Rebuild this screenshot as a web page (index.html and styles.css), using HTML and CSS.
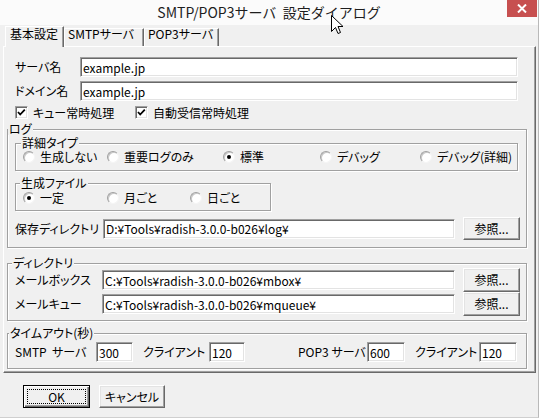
FILE: index.html
```html
<!DOCTYPE html>
<html lang="ja">
<head>
<meta charset="utf-8">
<title>SMTP/POP3サーバ 設定ダイアログ</title>
<link rel="stylesheet" href="styles.css">
</head>
<body>
<div class="window">
  <div class="titlebar">
    <div class="title-spacer"></div>
    <div class="title">SMTP/POP3サーバ  設定ダイアログ</div>
    <div class="close"><svg width="10" height="9" viewBox="0 0 10 9"><path d="M1 0.5 L9 8.5 M9 0.5 L1 8.5" stroke="#fff" stroke-width="2" fill="none"/></svg></div>
    <svg class="cursor" width="13" height="20" viewBox="0 0 13 20"><path d="M0.5 0.5 L0.5 16.5 L4.5 12.5 L7 18.5 L9.5 17.5 L7 11.5 L12 11.5 Z" fill="#fff" stroke="#000" stroke-width="1"/></svg>
  </div>

  <div class="tabs">
    <div class="tab active t1">基本設定</div>
    <div class="tab t2">SMTPサーバ</div>
    <div class="tab t3">POP3サーバ</div>
  </div>

  <div class="panel">
    <div class="field first">
      <span class="lbl lbl-top">サーバ名</span>
      <input class="edit grow" type="text" value="example.jp">
    </div>
    <div class="field second">
      <span class="lbl lbl-top">ドメイン名</span>
      <input class="edit grow" type="text" value="example.jp">
    </div>
    <div class="checks">
      <span class="check c1"><span class="cbox"><svg width="11" height="11" viewBox="0 0 11 11"><path d="M2 5 L4.2 7.5 L8.8 2.6" stroke="#000" stroke-width="1.8" fill="none"/></svg></span>キュー常時処理</span>
      <span class="check"><span class="cbox"><svg width="11" height="11" viewBox="0 0 11 11"><path d="M2 5 L4.2 7.5 L8.8 2.6" stroke="#000" stroke-width="1.8" fill="none"/></svg></span>自動受信常時処理</span>
    </div>

    <div class="group log">
      <div class="gtitle gt-log">ログ</div>
      <div class="group detail">
        <div class="gtitle gt-detail">詳細タイプ</div>
        <div class="radios detail-cols">
          <span class="opt"><span class="radio"></span>生成しない</span>
          <span class="opt"><span class="radio"></span>重要ログのみ</span>
          <span class="opt"><span class="radio on"></span>標準</span>
          <span class="opt"><span class="radio"></span>デバッグ</span>
          <span class="opt"><span class="radio"></span>デバッグ(詳細)</span>
        </div>
      </div>
      <div class="group gen">
        <div class="gtitle gt-gen">生成ファイル</div>
        <div class="radios gen-cols">
          <span class="opt"><span class="radio on"></span>一定</span>
          <span class="opt"><span class="radio"></span>月ごと</span>
          <span class="opt"><span class="radio"></span>日ごと</span>
        </div>
      </div>
      <div class="pathrow save">
        <span class="lbl lbl-save">保存ディレクトリ</span>
        <input class="edit grow" type="text" value="D:¥Tools¥radish-3.0.0-b026¥log¥">
        <button class="btn browse" type="button">参照...</button>
      </div>
    </div>

    <div class="group dirs">
      <div class="gtitle gt-dir">ディレクトリ</div>
      <div class="pathrow dirrow first-dir">
        <span class="lbl lbl-dir">メールボックス</span>
        <input class="edit grow" type="text" value="C:¥Tools¥radish-3.0.0-b026¥mbox¥">
        <button class="btn browse tall" type="button">参照...</button>
      </div>
      <div class="pathrow dirrow last-dir">
        <span class="lbl lbl-dir">メールキュー</span>
        <input class="edit grow" type="text" value="C:¥Tools¥radish-3.0.0-b026¥mqueue¥">
        <button class="btn browse tall" type="button">参照...</button>
      </div>
    </div>

    <div class="group timeout">
      <div class="gtitle gt-to">タイムアウト(秒)</div>
      <div class="torow">
        <span class="lbl to-smtp">SMTP  サーバ</span>
        <input class="edit num n37" type="text" value="300">
        <span class="lbl to-cli">クライアント</span>
        <input class="edit num n36" type="text" value="120">
        <span class="lbl to-pop">POP3 サーバ</span>
        <input class="edit num n38" type="text" value="600">
        <span class="lbl to-cli2">クライアント</span>
        <input class="edit num n38" type="text" value="120">
      </div>
    </div>
  </div>

  <div class="footer">
    <button class="btn default" type="button"><span class="focus">OK</span></button>
    <button class="btn cancel" type="button">キャンセル</button>
  </div>
</div>
</body>
</html>
```
FILE: styles.css
```css
* { box-sizing: border-box; }
html, body { margin: 0; padding: 0; }
body {
  width: 540px;
  height: 419px;
  overflow: hidden;
  background: #ffffff;
  font: 12px/14px "Noto Sans CJK JP", "Noto Sans", sans-serif;
  font-feature-settings: "palt" 1;
  color: #000;
}
.window {
  width: 539px;
  height: 418px;
  background: #f0f0f0;
  border-right: 1px solid #b9b9b9;
  border-bottom: 1px solid #cfcfcf;
  display: flex;
  flex-direction: column;
}

/* title bar */
.titlebar {
  flex: none;
  height: 25px;
  background: #fbfbfb;
  display: flex;
  align-items: flex-start;
  position: relative;
  z-index: 2;
}
.title-spacer { width: 31px; flex: none; }
.title {
  flex: 1;
  text-align: center;
  white-space: pre;
  font-size: 14px;
  line-height: 25px;
  font-feature-settings: normal;
  color: #1e1e1e;
}
.close {
  flex: none;
  width: 30px;
  height: 17px;
  margin-right: 1px;
  background: #c75050;
  display: flex;
  align-items: center;
  justify-content: center;
}
.cursor {
  position: absolute;
  left: 331px;
  top: 15px;
}

/* tabs */
.tabs {
  flex: none;
  height: 21px;
  display: flex;
  align-items: flex-end;
  padding-left: 5px;
  position: relative;
  z-index: 1;
}
.tab {
  height: 18px;
  padding-left: 3px;
  border-top: 1px solid #fff;
  border-left: 1px solid #fff;
  border-right: 1px solid #696969;
  box-shadow: inset -1px 0 0 #a0a0a0;
  line-height: 10px;
  white-space: nowrap;
}
.tab.active {
  height: 21px;
  margin-bottom: -1px;
  background: #f0f0f0;
  line-height: 13px;
  padding-left: 4px;
}
.t1 { width: 59px; }
.t2 { width: 80px; }
.t3 { width: 75px; }

/* main panel */
.panel {
  flex: none;
  margin-left: 3px;
  width: 533px;
  height: 327px;
  border: 1px solid;
  border-color: #fff #696969 #696969 #fff;
  box-shadow: inset -1px -1px 0 #a0a0a0;
  padding: 0 8px 0 3px;
  display: flex;
  flex-direction: column;
}

.field {
  display: flex;
  align-items: center;
  height: 20px;
  padding: 0 9px 0 8px;
}
.field.first { margin-top: 10px; }
.field.second { margin-top: 4px; }
.lbl { flex: none; white-space: pre; }
.lbl-top { width: 65px; }

.edit {
  height: 20px;
  margin: 0;
  padding: 0 0 0 2px;
  border: 1px solid;
  border-color: #a0a0a0 #fff #fff #a0a0a0;
  box-shadow: inset 1px 1px 0 #696969, inset -1px -1px 0 #e3e3e3;
  background: #fff;
  font: inherit;
  line-height: 18px;
  color: #000;
  outline: none;
}
.grow { flex: 1; min-width: 0; }

/* checkboxes */
.checks {
  display: flex;
  align-items: center;
  height: 17px;
  margin-top: 3px;
  padding-left: 8px;
}
.check { display: flex; align-items: center; white-space: nowrap; }
.c1 { width: 120px; }
.cbox {
  width: 13px;
  height: 13px;
  margin-right: 5px;
  border: 1px solid;
  border-color: #a0a0a0 #fff #fff #a0a0a0;
  box-shadow: inset 1px 1px 0 #696969, inset -1px -1px 0 #e3e3e3;
  background: #fff;
  display: flex;
  align-items: center;
  justify-content: center;
}
.cbox svg { display: block; }

/* group boxes */
.group {
  flex: none;
  border: 1px solid #a0a0a0;
  box-shadow: inset 1px 1px 0 #fff, 1px 1px 0 #fff;
}
.gtitle {
  width: max-content;
  height: 12px;
  line-height: 12px;
  margin-top: -7px;
  padding: 0 1px;
  background: #f0f0f0;
  white-space: nowrap;
}
.gt-log { margin-left: 0; }
.gt-detail { margin-left: 5px; }
.gt-gen { margin-left: 4px; }
.gt-dir { margin-left: 4px; }
.gt-to { margin-left: 1px; }

.log { margin-top: 8px; }
.detail { margin: 8px 8px 0 7px; }
.gen { margin: 12px 0 0 7px; width: 256px; }

.radios {
  display: grid;
  align-items: center;
  height: 14px;
  padding-left: 7px;
}
.detail .radios { margin: 1px 0 6px; }
.gen .radios { margin: 2px 0 5px; }
.detail-cols { grid-template-columns: 84px 116px 97px 100px auto; }
.gen-cols { grid-template-columns: 84px 83px auto; }
.opt { display: flex; align-items: center; white-space: nowrap; }
.radio {
  width: 12px;
  height: 12px;
  margin-right: 5px;
  border-radius: 50%;
  border: 1px solid;
  border-color: #a0a0a0 #f4f4f4 #f4f4f4 #a0a0a0;
  box-shadow: inset 1px 1px 0 #c8c8c8;
  background: #fff;
  display: flex;
  align-items: center;
  justify-content: center;
  flex: none;
}
.radio.on::after {
  content: "";
  width: 4px;
  height: 4px;
  border-radius: 50%;
  background: #000;
}

.pathrow {
  display: flex;
  align-items: center;
}
.save {
  height: 23px;
  margin: 6px 6px 7px 7px;
}
.lbl-save { width: 88px; }
.btn {
  flex: none;
  height: 23px;
  margin: 0;
  padding: 0;
  font: inherit;
  color: #000;
  background: #f0f0f0;
  border: 1px solid;
  border-color: #fff #696969 #696969 #fff;
  box-shadow: inset -1px -1px 0 #a0a0a0, inset 1px 1px 0 #e3e3e3;
  line-height: 14px;
}
.browse { width: 57px; margin-left: 8px; }
.browse.tall { height: 24px; }

.dirs { margin-top: 15px; }
.dirrow { height: 24px; margin: 0 6px 0 7px; }
.first-dir { margin-top: -1px; }
.last-dir { margin-bottom: 4px; }
.lbl-dir { width: 87px; }

.timeout { margin-top: 12px; }
.torow {
  display: flex;
  align-items: center;
  height: 20px;
  margin: 3px 0 6px 7px;
}
.num { flex: none; }
.n36 { width: 36px; }
.n37 { width: 37px; }
.n38 { width: 38px; }
.to-smtp { width: 81px; }
.to-cli { width: 66px; margin-left: 10px; }
.to-pop { width: 69px; margin-left: 53px; }
.to-cli2 { width: 64px; margin-left: 10px; }

/* footer buttons */
.footer {
  flex: none;
  display: flex;
  margin-top: 12px;
  padding-left: 23px;
}
.btn.default {
  width: 67px;
  border-color: #000;
  box-shadow: inset 1px 1px 0 #fff, inset -1px -1px 0 #696969, inset -2px -2px 0 #a0a0a0;
  display: flex;
  padding: 3px;
}
.focus {
  flex: 1;
  border: 1px dotted #000;
  display: flex;
  align-items: center;
  justify-content: center;
}
.btn.cancel { width: 66px; margin-left: 9px; }
```
